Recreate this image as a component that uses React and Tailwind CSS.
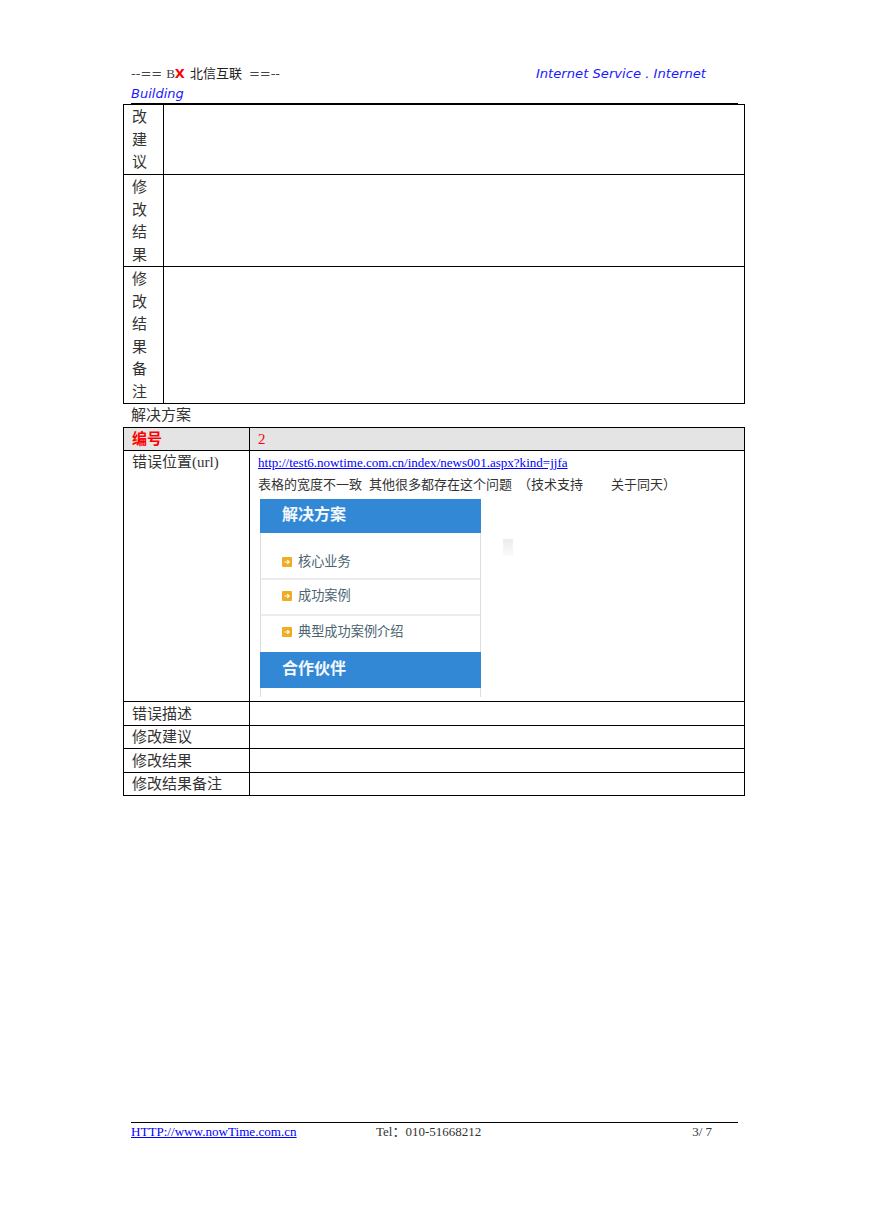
import React from 'react'

const serif = 'font-["Liberation_Serif","Noto_Sans_CJK_SC",serif]'

// first table: labels wrap one character per line
const narrowRows = [
  { label: ['改', '建', '议'], h: 'h-[70px]' },
  { label: ['修', '改', '结', '果'], h: 'h-[92px]' },
  { label: ['修', '改', '结', '果', '备', '注'], h: 'h-[137px]' },
]

const emptyRows = [
  { label: '错误描述', h: 'h-[24px]' },
  { label: '修改建议', h: 'h-[23px]' },
  { label: '修改结果', h: 'h-[24px]' },
  { label: '修改结果备注', h: 'h-[23px]' },
]

function Arrow() {
  return (
    <svg width="10" height="10" viewBox="0 0 10 10" className="shrink-0">
      <rect width="10" height="10" rx="1" fill="#f0ad24" />
      <path d="M2.5 5H7M5.3 3.2L7.2 5L5.3 6.8" stroke="#fff" strokeWidth="1.1" fill="none" />
    </svg>
  )
}

function MenuItem({ text, h, line = true }) {
  return (
    <div className={`flex items-center gap-[6px] pl-[21px] text-[13.2px] text-[#4a6470] ${h} ${line ? 'border-b-2 border-[#ececec]' : ''}`}>
      <Arrow />
      <span className="leading-none">{text}</span>
    </div>
  )
}

// the pasted screenshot of the sidebar inside the table cell
function SidebarShot() {
  return (
    <div className="mt-[4px] flex h-[198px]">
      <div className="flex w-[221px] flex-col border-x border-[#dedede]">
        <div className="-mx-px flex h-[34px] items-center bg-[#3388d6] pb-[2px] pl-[22px] text-[16px] font-bold text-[#f4f8fc]">解决方案</div>
        <div className="h-[12px]" />
        <MenuItem text="核心业务" h="h-[35px]" />
        <MenuItem text="成功案例" h="h-[36px] pb-[2px]" />
        <MenuItem text="典型成功案例介绍" h="h-[36px] pb-[4px]" line={false} />
        <div className="-mx-px flex h-[36px] items-center bg-[#3388d6] pb-[2px] pl-[22px] text-[16px] font-bold text-[#f4f8fc]">合作伙伴</div>
      </div>
      <div className="ml-[22px] mt-[40px] h-[17px] w-[10px] bg-gradient-to-b from-[#ececec] to-[#fbfbfb]" />
    </div>
  )
}

export default function App() {
  return (
    <div className={`min-h-[1228px] w-[869px] bg-white text-[#333] ${serif}`}>
      <div className="px-[123px] pt-[64px]">
        {/* page header */}
        <div className="ml-[8px] mr-[8px] h-[41px] border-b-2 border-black">
          <div className="flex h-[20px] items-center justify-between pr-[32px] font-['DejaVu_Sans','Noto_Sans_CJK_SC',sans-serif] text-[13px] leading-[20px]">
            <span className="flex items-center text-[#444]">
              <span>--==</span>
              <span className="ml-[4px] font-['Liberation_Serif']">B</span>
              <span className="font-bold text-[#f00]">X</span>
              <span className="ml-[5px] text-[#222]">北信互联</span>
              <span className="ml-[7px]">==--</span>
            </span>
            <span className="text-[13.15px] italic text-[#1a1aff]">Internet Service . Internet</span>
          </div>
          <div className="h-[20px] font-['DejaVu_Sans'] text-[13px] italic leading-[20px] text-[#1a1aff]">Building</div>
        </div>

        {/* table continued from previous page */}
        <table className="-mt-px w-[622px] table-fixed border-collapse text-[15px]">
          <colgroup>
            <col className="w-[40px]" />
            <col />
          </colgroup>
          <tbody>
            {narrowRows.map((row, i) => (
              <tr key={i} className={row.h}>
                <td className="border border-black pl-[8px] pt-[1px] align-top leading-[22.5px]">
                  {row.label.map((c, j) => <div key={j}>{c}</div>)}
                </td>
                <td className="border border-black" />
              </tr>
            ))}
          </tbody>
        </table>

        <div className="h-[23px] pl-[8px] text-[15px] leading-[22px]">解决方案</div>

        <table className="w-[622px] table-fixed border-collapse text-[15px]">
          <colgroup>
            <col className="w-[126px]" />
            <col />
          </colgroup>
          <tbody>
            <tr className="h-[23px] bg-[#e4e4e4]">
              <td className="border border-black pl-[8px] font-bold leading-[22px] text-[#f00]">编号</td>
              <td className="border border-black pl-[8px] leading-[22px] text-[#f00]">2</td>
            </tr>
            <tr className="h-[251px]">
              <td className="border border-black pl-[8px] pt-0 align-top leading-[22px]">错误位置(url)</td>
              <td className="border border-black pl-[8px] pt-[2px] align-top">
                <div className="text-[13.05px] leading-[20px] text-[#00f] underline">http://test6.nowtime.com.cn/index/news001.aspx?kind=jjfa</div>
                <div className="mt-[2px] whitespace-nowrap text-[13px] leading-[20px]">
                  表格的宽度不一致
                  <span className="ml-[7px]">其他很多都存在这个问题</span>
                  <span className="ml-[6px]">（技术支持</span>
                  <span className="ml-[28px]">关于同天）</span>
                </div>
                <div className="pl-[2px]">
                  <SidebarShot />
                </div>
              </td>
            </tr>
            {emptyRows.map((row) => (
              <tr key={row.label} className={row.h}>
                <td className="border border-black pl-[8px] leading-[22px]">{row.label}</td>
                <td className="border border-black" />
              </tr>
            ))}
          </tbody>
        </table>

        {/* page footer */}
        <div className="mx-[8px] mt-[326px] flex h-[20px] items-center border-t border-black pb-[1px] pr-[26px] text-[13px] leading-[20px]">
          <span className="w-[245px] text-[13.1px] text-[#00f] underline">HTTP://www.nowTime.com.cn</span>
          <span>Tel：010-51668212</span>
          <span className="ml-auto">3/ 7</span>
        </div>
      </div>
    </div>
  )
}
